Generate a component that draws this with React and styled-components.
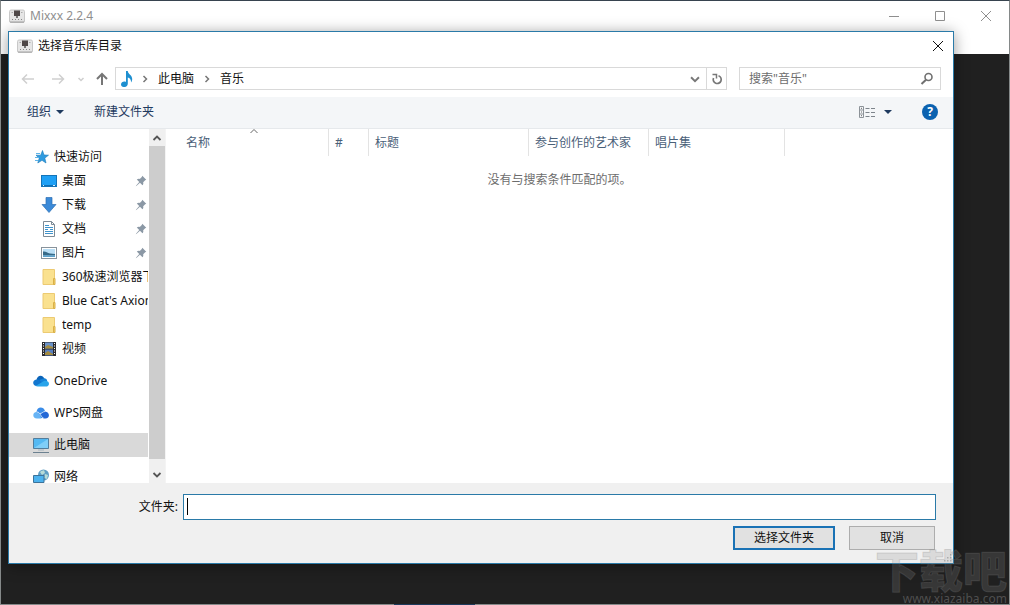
import React from 'react';
import styled, { createGlobalStyle } from 'styled-components';

const COLORS = {
  text: '#111',
  muted: '#6d6d6d',
  inactive: '#8f8f8f',
  link: '#1f3a5f',
  header: '#4a6078',
  line: '#d9d9d9',
  accent: '#1a72b5',
  frame: '#2a7aa8',
  panel: '#f0f0f0',
  toolbar: '#f4f6f8',
  dark: '#202020',
};

const PLACES = [
  { icon: 'star', label: '快速访问' },
  { icon: 'desktop', label: '桌面', nested: true, pinned: true },
  { icon: 'download', label: '下载', nested: true, pinned: true },
  { icon: 'document', label: '文档', nested: true, pinned: true },
  { icon: 'picture', label: '图片', nested: true, pinned: true },
  { icon: 'folder', label: '360极速浏览器下载', nested: true },
  { icon: 'folder', label: "Blue Cat's Axiom", nested: true },
  { icon: 'folder', label: 'temp', nested: true },
  { icon: 'video', label: '视频', nested: true },
  { icon: 'onedrive', label: 'OneDrive', spaced: true },
  { icon: 'wps', label: 'WPS网盘', spaced: true },
  { icon: 'computer', label: '此电脑', spaced: true, selected: true },
  { icon: 'network', label: '网络', spaced: true },
];

const COLUMNS = [
  { label: '名称', width: 163, sorted: true },
  { label: '#', width: 40 },
  { label: '标题', width: 160 },
  { label: '参与创作的艺术家', width: 120 },
  { label: '唱片集', width: 136 },
];

const ICONS = {
  app: (
    <>
      <rect x="0.5" y="2" width="15" height="12.5" rx="1.5" fill="#e6e6e6" stroke="#c8c8c8" />
      <path d="M1 14h14" stroke="#a4a4a4" />
      <rect x="5" y="2.5" width="6" height="5.5" fill="#4f4848" />
      <path d="M2.5 4.500h1.500M12 4.500h1.500" stroke="#aaa" />
      <path d="M7 8h2v2H7z" fill="#777" />
      <path d="M3 11.500h1M6 11.500h1M9 11.500h1M12 11.500h1" stroke="#888" />
    </>
  ),
  star: (
    <>
      <path d="M9.5 1.5 11 6l4.500.2-3.700 2.900 1.200 4.900-4-2.700-4.200 2.700 1.400-4.800L3 6.200h4.700z" fill="#2f9be0" stroke="#1878b8" strokeWidth="0.6" />
      <path d="M3 4.500h4M2 8.500h4M2 11.500h3" stroke="#5fb4e8" />
    </>
  ),
  desktop: (
    <>
      <rect x="0.5" y="2.500" width="15" height="11" fill="#1fa0f5" stroke="#1474b8" />
      <path d="M1 12.500h14" stroke="#0f6fb4" />
      <path d="M2 12.500h1M12 12.500h2" stroke="#d8efff" />
    </>
  ),
  download: <path d="M5 .5h6v7h4L8 15.500 1 7.500h4z" fill="#3b8ad8" stroke="#2c6fb3" strokeWidth="0.7" />,
  document: (
    <>
      <path d="M2.500.5h8l3 3v12h-11z" fill="#fff" stroke="#7d8b96" />
      <path d="M10.500.5v3h3" fill="none" stroke="#7d8b96" />
      <path d="M4 4.500h4M4 6.500h8M4 8.500h3M9 8.500h3M4 10.500h8M4 12.500h8" stroke="#3f93cc" />
    </>
  ),
  picture: (
    <>
      <rect x="0.5" y="2.500" width="15" height="11" fill="#fff" stroke="#88939c" />
      <path d="M2 4h12v8H2z" fill="#b9def5" />
      <path d="M2 6.500c3-.5 4 1.500 7 2l5 .5V10.500H2z" fill="#376a88" />
      <path d="M2 10.500h12V12H2z" fill="#5da2cc" />
    </>
  ),
  folder: (
    <>
      <path d="M2 .5h11.500v15H2z" fill="#fae18f" stroke="#ecca72" />
      <path d="M12.500 9.500h1.500v6h-1.500z" fill="#f5d26b" stroke="#d9b048" />
    </>
  ),
  video: (
    <>
      <path d="M1 1h14v14H1z" fill="#2a2a2e" />
      <path d="M4 1.500h8v6H4z" fill="#6a92c8" />
      <path d="M4 8.500h8v6H4z" fill="#587fc0" />
      <path d="m4 6 3-2 5 2v1.500H4zM4 12l3-2 5 3v1H4z" fill="#a58c40" />
      <path d="M2.500 2v12M13.500 2v12" stroke="#fff" strokeDasharray="1 1.500" />
    </>
  ),
  onedrive: (
    <>
      <path d="M3.500 6.500C4.500 2 9.500 1 11.500 5.800L8 11z" fill="#0b63b8" />
      <path d="M11 5.200c2 0 3 1 3.200 2.700L9 11 6 7z" fill="#1683d8" />
      <path d="M3.700 13C-.8 13-1 7 3.300 6.500c2-.3 3 .5 4 1.200L12 12z" fill="#1276cf" />
      <path d="M2.500 13 11 8c2.500-.7 5 .8 5 2.700S14.500 13.500 13 13.500H4.500z" fill="#29a4ea" />
    </>
  ),
  wps: (
    <>
      <path d="M3.500 7C4 1.500 10.500 1 12 6l-3 7H5z" fill="#3a8ce8" />
      <path d="M4 13.500C-1 13.500-.7 7 3.500 7c2.500 0 3.500 3 5 6.500z" fill="#67b4f5" />
      <path d="M12 6.500c5 .2 5.300 7 .5 7H11C8.500 13 8 10 6.500 8.500 9 9 10 6.500 12 6.500z" fill="#2368d6" />
      <path d="M4 7c3.500 0 3.500 5 6.500 6M6.500 8.500C9 9 9.500 6.500 12 6.500" fill="none" stroke="#e8f4ff" strokeWidth="0.8" />
    </>
  ),
  computer: (
    <>
      <path d="M.5 1.500h15v10H.5z" fill="#55b9f2" stroke="#527d9c" />
      <path d="m1 11 14-9v9z" fill="#7fcef8" />
      <path d="M5 13h6" stroke="#a7b7c2" />
      <path d="M0 15.500h16" stroke="#6c8190" />
    </>
  ),
  network: (
    <>
      <circle cx="10.500" cy="6" r="5.500" fill="#5f9fc4" />
      <path d="M7 3c2-2 3-1 4-2l1 3-3 2zM12 5l3 1-1 4-3-1z" fill="#b7dcd8" />
      <path d="M.5 6.500h10.500v7H.5z" fill="#4cb2ee" stroke="#3c739a" />
      <path d="M3 15.500h6" stroke="#6c8190" />
    </>
  ),
  note: (
    <path d="M7 0h1.800c.2 3.500 4.700 4 4.400 8.500-.1 1.200-.6 2.200-1.200 3C12.200 8.500 11 7 8.800 6.500v6.300C8.800 17 2 17 2 13.500 2 11 5 10 7 11z" fill="#1e8fd0" />
  ),
  pin: (
    <path d="m9.500 2 4.500 4.500-1.200.6-2.300 2.300c.4 1.400 0 2.600-.8 3.400L6.800 10 3 13.500 2 14l.5-1L6 9.200 3.200 6.300c1-.8 2.200-1 3.400-.7l2.300-2.300z" fill="#8b98a5" />
  ),
  back: <path d="M14 8H3M7 3.500 2.500 8 7 12.500" fill="none" stroke="#cfcfcf" strokeWidth="1.500" />,
  forward: <path d="M2 8h11M9 3.500 13.500 8 9 12.500" fill="none" stroke="#cfcfcf" strokeWidth="1.500" />,
  recent: <path d="m5.500 7 2.500 2.500L10.500 7" fill="none" stroke="#cfcfcf" strokeWidth="1.500" />,
  up: <path d="M8 14V3M3 8l5-5 5 5" fill="none" stroke="#767676" strokeWidth="2" />,
  crumb: <path d="m6.500 5 3 3-3 3" fill="none" stroke="#777" strokeWidth="1.500" />,
  down: <path d="m3.500 6 4.500 4.500L12.500 6" fill="none" stroke="#777" strokeWidth="2.200" />,
  scrollUp: <path d="m4.500 10 3.500-3.500 3.500 3.500" fill="none" stroke="#555" strokeWidth="1.800" />,
  scrollDown: <path d="m4.500 6 3.500 3.500L11.500 6" fill="none" stroke="#555" strokeWidth="1.800" />,
  sort: <path d="M4.500 10 8 6.500l3.500 3.500" fill="none" stroke="#666" />,
  refresh: (
    <>
      <path d="M9.500 4.700A4 4 0 1 1 4.500 7" fill="none" stroke="#777" strokeWidth="1.700" />
      <path d="M3.500 3.500h4v4" fill="none" stroke="#777" strokeWidth="1.500" />
    </>
  ),
  search: (
    <>
      <circle cx="9.500" cy="6" r="3.500" fill="none" stroke="#707070" strokeWidth="1.600" />
      <path d="M7 8.700 2.500 13" stroke="#707070" strokeWidth="2" />
    </>
  ),
  caret: <path d="M4 6h8l-4 4z" fill="#1f3a5f" />,
  view: (
    <>
      <path d="M.5 2.500h4v11h-4zM.5 6h4M.5 10h4" fill="none" stroke="#8c9298" />
      <path d="M2 4.300h1M2 8h1M2 11.700h1" stroke="#666" />
      <path d="M6.500 4.500h4M12 4.500h4M6.500 8.500h4M12 8.500h4M6.500 12.500h4M12 12.500h4" stroke="#7d848b" />
    </>
  ),
  minimize: <path d="M3 8.500h10" stroke="#8f8f8f" />,
  maximize: <path d="M3.500 3.500h9v9h-9z" fill="none" stroke="#8f8f8f" />,
  close: <path d="m3 3 10 10M13 3 3 13" stroke="currentColor" />,
  grip: (
    <path d="M12 4h2v2h-2zM12 8h2v2h-2zM12 12h2v2h-2zM8 8h2v2H8zM8 12h2v2H8zM4 12h2v2H4z" fill="#b5b5b5" />
  ),
};

const Icon = ({ id, size = 16 }) => (
  <Glyph width={size} height={size} viewBox="0 0 16 16" aria-hidden="true">
    {ICONS[id]}
  </Glyph>
);

const Sidebar = () => (
  <SidebarWrapper>
    <PlaceList>
      {PLACES.map((place) => (
        <PlaceItem key={place.label} $spaced={place.spaced}>
          <PlaceButton $nested={place.nested} $selected={place.selected}>
            <Icon id={place.icon} />
            <PlaceLabel>{place.label}</PlaceLabel>
            {place.pinned && <Icon id="pin" size={14} />}
          </PlaceButton>
        </PlaceItem>
      ))}
    </PlaceList>
    <Scrollbar>
      <ScrollButton aria-label="向上滚动">
        <Icon id="scrollUp" />
      </ScrollButton>
      <ScrollThumb />
      <ScrollButton aria-label="向下滚动">
        <Icon id="scrollDown" />
      </ScrollButton>
    </Scrollbar>
  </SidebarWrapper>
);

const FileTable = () => (
  <TableArea>
    <Table>
      <thead>
        <tr>
          {COLUMNS.map(({ label, width, sorted }) => (
            <HeaderCell key={label} $width={width} $sorted={sorted}>
              {label}
              {sorted && (
                <SortMark>
                  <Icon id="sort" />
                </SortMark>
              )}
            </HeaderCell>
          ))}
          <td />
        </tr>
      </thead>
      <tbody>
        <tr>
          <EmptyCell colSpan={COLUMNS.length + 1}>没有与搜索条件匹配的项。</EmptyCell>
        </tr>
      </tbody>
    </Table>
  </TableArea>
);

const FolderDialog = () => (
  <Dialog role="dialog" aria-label="选择音乐库目录">
    <DialogTitleBar>
      <Icon id="app" />
      <DialogTitle>选择音乐库目录</DialogTitle>
      <DialogClose aria-label="关闭">
        <Icon id="close" />
      </DialogClose>
    </DialogTitleBar>

    <AddressRow>
      <NavButtons>
        <NavButton $width={30} aria-label="后退"><Icon id="back" /></NavButton>
        <NavButton $width={30} aria-label="前进"><Icon id="forward" /></NavButton>
        <NavButton $width={16} aria-label="最近"><Icon id="recent" /></NavButton>
        <NavButton $width={26} aria-label="上移"><Icon id="up" /></NavButton>
      </NavButtons>
      <AddressBar>
        <Icon id="note" />
        <Icon id="crumb" />
        <Crumb>此电脑</Crumb>
        <Icon id="crumb" />
        <Crumb>音乐</Crumb>
        <HistoryButton aria-label="历史"><Icon id="down" size={14} /></HistoryButton>
        <RefreshButton aria-label="刷新"><Icon id="refresh" /></RefreshButton>
      </AddressBar>
      <SearchBox>
        <SearchInput type="text" aria-label="搜索" placeholder={'搜索"音乐"'} />
        <Icon id="search" />
      </SearchBox>
    </AddressRow>

    <Toolbar>
      <ToolButton>
        组织
        <Icon id="caret" />
      </ToolButton>
      <ToolButton>新建文件夹</ToolButton>
      <ToolSpacer />
      <ViewButton aria-label="更改视图">
        <Icon id="view" />
        <Icon id="caret" />
      </ViewButton>
      <HelpButton aria-label="帮助">?</HelpButton>
    </Toolbar>

    <Content>
      <Sidebar />
      <FileTable />
    </Content>

    <Footer>
      <FieldRow>
        <FieldLabel htmlFor="folder">文件夹:</FieldLabel>
        <FolderInput id="folder" type="text" />
      </FieldRow>
      <Actions>
        <ActionButton $primary>选择文件夹</ActionButton>
        <ActionButton>取消</ActionButton>
      </Actions>
      <Grip>
        <Icon id="grip" size={12} />
      </Grip>
    </Footer>
  </Dialog>
);

const App = () => (
  <>
    <GlobalStyle />
    <Window>
      <TitleBar>
        <Icon id="app" />
        <Title>Mixxx 2.2.4</Title>
        <WindowButton aria-label="最小化"><Icon id="minimize" /></WindowButton>
        <WindowButton aria-label="最大化"><Icon id="maximize" /></WindowButton>
        <WindowButton aria-label="关闭"><Icon id="close" /></WindowButton>
      </TitleBar>
      <MenuBar />
      <Workspace />
      <BottomEdge />
      <FolderDialog />
      <Watermark>
        <WatermarkName>下载吧</WatermarkName>
        <WatermarkUrl>www.xiazaiba.com</WatermarkUrl>
      </Watermark>
    </Window>
  </>
);

const GlobalStyle = createGlobalStyle`
  *, *::before, *::after {
    box-sizing: border-box;
  }

  body {
    margin: 0;
    background: ${COLORS.dark};
  }

  body, button, input {
    font-family: 'Noto Sans', 'Noto Sans CJK SC', sans-serif;
    font-size: 12px;
    line-height: 18px;
    color: ${COLORS.text};
  }
`;

const Glyph = styled.svg`
  display: block;
  flex: none;
`;

const UnstyledButton = styled.button`
  display: flex;
  align-items: center;
  justify-content: center;
  padding: 0;
  border: none;
  background: transparent;
  color: inherit;
  cursor: pointer;
`;

const Window = styled.div`
  position: relative;
  display: flex;
  flex-direction: column;
  height: 100vh;
  overflow: hidden;
  border: 1px solid #858989;
  border-top-color: #37434f;
  border-bottom: none;
`;

const TitleBar = styled.header`
  display: flex;
  align-items: center;
  height: 29px;
  padding-left: 8px;
  background: white;
  color: ${COLORS.inactive};
`;

const Title = styled.div`
  flex: 1;
  padding-left: 5px;
`;

const WindowButton = styled(UnstyledButton)`
  width: 46px;
  height: 100%;
`;

const MenuBar = styled.div`
  height: 24px;
  background: white;
`;

const Workspace = styled.main`
  flex: 1;
  background: ${COLORS.dark};
`;

const BottomEdge = styled.div`
  height: 1px;
  background: linear-gradient(to right, #858989 39%, #1d3a5c 39%, #1d3a5c 47%, #858989 47%);
`;

const Dialog = styled.section`
  position: absolute;
  top: 30px;
  right: 55px;
  bottom: 41px;
  left: 7px;
  display: flex;
  flex-direction: column;
  border: 1px solid ${COLORS.frame};
  background: white;
  box-shadow: 0 2px 14px hsl(0deg 0% 0% / 0.4);
`;

const DialogTitleBar = styled.header`
  display: flex;
  align-items: center;
  height: 29px;
  padding: 0 0 1px 8px;
`;

const DialogTitle = styled.div`
  flex: 1;
  padding-left: 5px;
`;

const DialogClose = styled(UnstyledButton)`
  width: 30px;
  height: 100%;
`;

const AddressRow = styled.div`
  display: flex;
  align-items: center;
  height: 36px;
  padding: 0 12px 1px 4px;
`;

const NavButtons = styled.div`
  display: flex;
`;

const NavButton = styled(UnstyledButton)`
  width: ${(p) => p.$width}px;
  height: 24px;
`;

const AddressBar = styled.div`
  flex: 1;
  display: flex;
  align-items: center;
  gap: 2px;
  height: 23px;
  padding-left: 3px;
  border: 1px solid ${COLORS.line};
`;

const Crumb = styled(UnstyledButton)`
  padding: 0 3px;
`;

const HistoryButton = styled(UnstyledButton)`
  width: 18px;
  height: 100%;
  margin-left: auto;
`;

const RefreshButton = styled(UnstyledButton)`
  width: 20px;
  height: 100%;
  border-left: 1px solid ${COLORS.line};
`;

const SearchBox = styled.div`
  flex: 0 0 202px;
  min-width: 0;
  display: flex;
  align-items: center;
  height: 23px;
  margin-left: 12px;
  padding: 0 5px 0 9px;
  border: 1px solid ${COLORS.line};
`;

const SearchInput = styled.input`
  flex: 1;
  min-width: 0;
  padding: 0;
  border: none;
  outline: none;

  &::placeholder {
    color: ${COLORS.muted};
    opacity: 1;
  }
`;

const Toolbar = styled.div`
  display: flex;
  align-items: center;
  height: 32px;
  padding: 0 15px 1px 18px;
  border-bottom: 1px solid #e6e9ec;
  background: ${COLORS.toolbar};
`;

const ToolButton = styled(UnstyledButton)`
  gap: 1px;
  margin-right: 26px;
  color: ${COLORS.link};
`;

const ToolSpacer = styled.div`
  flex: 1;
`;

const ViewButton = styled(UnstyledButton)`
  gap: 5px;
  margin-right: 26px;
`;

const HelpButton = styled(UnstyledButton)`
  width: 16px;
  height: 16px;
  border-radius: 50%;
  background: #0b62b0;
  color: white;
  font-weight: 700;
`;

const Content = styled.div`
  flex: 1;
  display: flex;
  min-height: 0;
`;

const SidebarWrapper = styled.nav`
  flex: 0 0 156px;
  min-width: 0;
  display: flex;
`;

const PlaceList = styled.ul`
  flex: 1;
  min-width: 0;
  margin: 0;
  padding: 16px 1px 0 0;
  overflow: hidden;
  list-style: none;
`;

const PlaceItem = styled.li`
  margin-top: ${(p) => (p.$spaced ? 8 : 0)}px;
`;

const PlaceButton = styled(UnstyledButton)`
  justify-content: flex-start;
  gap: 5px;
  width: 100%;
  height: 24px;
  padding-left: ${(p) => (p.$nested ? 32 : 24)}px;
  background: ${(p) => (p.$selected ? '#d9d9d9' : 'transparent')};
  text-align: left;
`;

const PlaceLabel = styled.span`
  flex: 1;
  min-width: 0;
  overflow: hidden;
  white-space: nowrap;
`;

const Scrollbar = styled.div`
  flex: 0 0 16px;
  display: flex;
  flex-direction: column;
  background: ${COLORS.panel};
`;

const ScrollButton = styled(UnstyledButton)`
  height: 17px;
`;

const ScrollThumb = styled.div`
  flex: 1;
  margin-bottom: 7px;
  background: #cdcdcd;
`;

const TableArea = styled.div`
  flex: 1;
  min-width: 0;
  border-left: 1px solid #f4f4f4;
`;

const Table = styled.table`
  width: 100%;
  table-layout: fixed;
  border-collapse: separate;
  border-spacing: 0;
`;

const HeaderCell = styled.th`
  position: relative;
  width: ${(p) => p.$width}px;
  height: 27px;
  padding: 0 0 0 ${(p) => (p.$sorted ? 20 : 6)}px;
  border-right: 1px solid #e3e3e3;
  color: ${COLORS.header};
  font-weight: 400;
  text-align: left;
  white-space: nowrap;
`;

const SortMark = styled.span`
  position: absolute;
  top: -6px;
  left: 80px;
`;

const EmptyCell = styled.td`
  padding: 15px 0 0;
  color: ${COLORS.muted};
  text-align: center;
`;

const Footer = styled.footer`
  position: relative;
  padding: 11px 17px 13px 0;
  background: ${COLORS.panel};
`;

const FieldRow = styled.div`
  display: flex;
  align-items: center;
  gap: 5px;
`;

const FieldLabel = styled.label`
  flex: 0 0 169px;
  text-align: right;
`;

const FolderInput = styled.input`
  flex: 1;
  height: 26px;
  padding: 0 4px;
  border: 1px solid ${COLORS.frame};
  outline: none;
  background: linear-gradient(black, black) 3px 3px / 1px 17px no-repeat white;
`;

const Actions = styled.div`
  display: flex;
  justify-content: flex-end;
  gap: 14px;
  padding: 6px 1px 0 0;
`;

const ActionButton = styled(UnstyledButton)`
  width: ${(p) => (p.$primary ? 102 : 86)}px;
  height: 24px;
  border: ${(p) => (p.$primary ? `2px solid ${COLORS.accent}` : '1px solid #adadad')};
  background: #e1e1e1;
`;

const Grip = styled.div`
  position: absolute;
  right: 0;
  bottom: 0;
`;

const Watermark = styled.div`
  position: absolute;
  right: 2px;
  bottom: 0;
  display: flex;
  flex-direction: column;
  align-items: flex-end;
  color: hsl(0deg 0% 55% / 0.22);
  pointer-events: none;
`;

const WatermarkName = styled.span`
  font-size: 44px;
  font-weight: 900;
  line-height: 44px;
  -webkit-text-stroke: 1px hsl(0deg 0% 50% / 0.25);
`;

const WatermarkUrl = styled.span`
  color: hsl(0deg 0% 60% / 0.4);
  font-size: 12px;
  line-height: 12px;
`;

export default App;
